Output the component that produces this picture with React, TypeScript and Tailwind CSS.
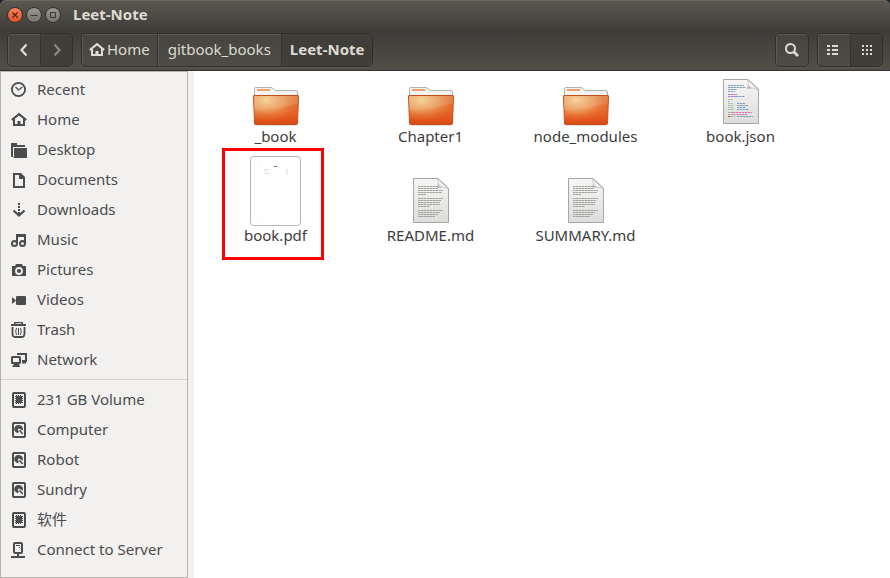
import React, { useId } from "react";

type IconProps = { children: React.ReactNode; className?: string };

function Glyph({ children, className = "" }: IconProps) {
  return (
    <svg viewBox="0 0 16 16" width="16" height="16" fill="currentColor" aria-hidden="true" className={"shrink-0 " + className}>
      {children}
    </svg>
  );
}

const HomeIcon = () => (
  <Glyph>
    <path d="M0.800 8 8 2.200 15.200 8" fill="none" stroke="currentColor" strokeWidth="2.200" />
    <path d="M3 7V13H13V7" fill="none" stroke="currentColor" strokeWidth="2" />
    <path d="M6.500 9H9.500V13H6.500Z" />
  </Glyph>
);
const RecentIcon = () => (
  <Glyph>
    <circle cx="7.500" cy="7.500" r="6.600" fill="none" stroke="currentColor" strokeWidth="1.800" />
    <path d="m4.500 5 3 3 4-3" fill="none" stroke="currentColor" strokeWidth="1.200" />
  </Glyph>
);
const DesktopIcon = () => (
  <Glyph>
    <path d="M0 1H6V3H14V5H3V15H0Z" />
    <path d="M2.500 6H16V16H2.500Z" />
    <path d="M2.500 5V15" stroke="#f2f1f0" />
    <path d="M2 5.500H15" stroke="#f2f1f0" />
  </Glyph>
);
const DocumentIcon = () => (
  <Glyph>
    <path d="M2 1H10L14 5V16H2ZM4 3V14H12V7H8V3Z" fillRule="evenodd" />
  </Glyph>
);
const DownloadIcon = () => (
  <Glyph>
    <path d="M7 1H9V3H7ZM7 4H9V6H7ZM7 7H9V9H7ZM7 10H9V13H7Z" />
    <path d="m2.500 8.500 5.500 5 5.500-5" fill="none" stroke="currentColor" strokeWidth="2.200" />
  </Glyph>
);
const MusicIcon = () => (
  <Glyph>
    <path d="M5 2H15V12H13V5H7V12H5Z" />
    <circle cx="3.500" cy="11.500" r="2.500" fill="none" stroke="currentColor" strokeWidth="2" />
    <circle cx="11.500" cy="11.500" r="2.500" fill="none" stroke="currentColor" strokeWidth="2" />
  </Glyph>
);
const CameraIcon = () => (
  <Glyph>
    <path d="M1 4H4L5 2H11L12 4H15V14H1Z" />
    <circle cx="8" cy="9" r="3" fill="none" stroke="#f2f1f0" strokeWidth="1.800" />
  </Glyph>
);
const VideoIcon = () => (
  <Glyph>
    <path d="M1 5 5 8.500 1 12Z" />
    <rect x="5" y="4" width="10" height="9" rx="1" />
  </Glyph>
);
const TrashIcon = () => (
  <Glyph>
    <path d="M3 0H12V2H15V4H0V2H3ZM4.500 1.200V2H10.500V1.200Z" fillRule="evenodd" />
    <path d="M1.500 5V11Q1.500 15 4 15H11Q13.500 15 13.500 11V5" fill="none" stroke="currentColor" strokeWidth="1.800" />
    <path d="M5.500 6Q4 9 5.500 13M7.500 6V13M9.500 6Q11 9 9.500 13" fill="none" stroke="currentColor" />
  </Glyph>
);
const NetworkIcon = () => (
  <Glyph>
    <path d="M7 3V2H15V9H11M11 10.500H15" fill="none" stroke="currentColor" strokeWidth="2" />
    <rect x="1" y="5" width="8" height="6" rx="0.500" fill="#f2f1f0" stroke="currentColor" strokeWidth="2" />
    <path d="M3 12H8L9 15H1Z" />
  </Glyph>
);
const ChipIcon = () => (
  <Glyph>
    <rect x="2" y="1" width="12" height="14" rx="1" fill="none" stroke="currentColor" strokeWidth="2" />
    <rect x="5" y="4" width="6" height="7" />
    <path d="M4 4.500H12M4 6.500H12M4 8.500H12M4 10.500H12M5.500 3V12M7.500 3V12M9.500 3V12" stroke="currentColor" />
  </Glyph>
);
const DiskIcon = () => (
  <Glyph>
    <rect x="2" y="1" width="12" height="14" rx="1" fill="none" stroke="currentColor" strokeWidth="2" />
    <path d="M8 3A4 4 0 0 0 5 10.200Q6 11.200 7 11L8 9.500Q6.800 8.800 6.900 7.500A1.400 1.400 0 0 1 9.200 7.200L11.800 8.500A4.200 4.200 0 0 0 8 3Z" />
    <path d="m8.500 8.300 3.200 3.700" stroke="currentColor" strokeWidth="1.600" />
  </Glyph>
);
const ServerIcon = () => (
  <Glyph>
    <rect x="3" y="1" width="8" height="10" rx="1" fill="none" stroke="currentColor" strokeWidth="2" />
    <path d="M5 3H9V4H5ZM8 5H9V6H8ZM6 11H8V14H14V16H0V14H6Z" />
  </Glyph>
);

const places: [string, () => React.ReactElement][] = [
  ["Recent", RecentIcon],
  ["Home", HomeIcon],
  ["Desktop", DesktopIcon],
  ["Documents", DocumentIcon],
  ["Downloads", DownloadIcon],
  ["Music", MusicIcon],
  ["Pictures", CameraIcon],
  ["Videos", VideoIcon],
  ["Trash", TrashIcon],
  ["Network", NetworkIcon],
];

const devices: [string, () => React.ReactElement][] = [
  ["231 GB Volume", ChipIcon],
  ["Computer", DiskIcon],
  ["Robot", DiskIcon],
  ["Sundry", DiskIcon],
  ["软件", ChipIcon],
  ["Connect to Server", ServerIcon],
];

function PlaceList({ items }: { items: typeof places }) {
  return (
    <ul>
      {items.map(([label, Icon]) => (
        <li key={label}>
          <a href="#" className="flex h-[30px] items-center gap-2.5 pl-2.5">
            <Icon />
            <span className="pb-0.5 whitespace-nowrap">{label}</span>
          </a>
        </li>
      ))}
    </ul>
  );
}

function FolderArt() {
  const id = useId();
  return (
    <svg width="48" height="48" viewBox="0 0 48 48" aria-hidden="true">
      <defs>
        <linearGradient id={id + "f"} x1="0" y1="0" x2="0" y2="1">
          <stop offset="0" stopColor="#d9793c" />
          <stop offset="0.500" stopColor="#e4692b" />
          <stop offset="1" stopColor="#dd4814" />
        </linearGradient>
        <radialGradient id={id + "g"} cx="0.280" cy="0.150" r="0.850">
          <stop offset="0" stopColor="#f6cf92" />
          <stop offset="0.500" stopColor="#eda564" stopOpacity="0.700" />
          <stop offset="1" stopColor="#f0561c" stopOpacity="0" />
        </radialGradient>
      </defs>
      <ellipse cx="24" cy="46" rx="22" ry="1.200" fill="#00000022" />
      <path d="M2.500 18V9.500Q2.500 8.500 4 8.500H19Q20.500 8.500 21.500 10T24 11.500H44Q45.500 11.500 45.500 13V18" fill="#f3f3f2" stroke="#b3b2b0" />
      <path d="M5 10H18V12H5Z" fill="#f0a070" />
      <path d="M1.500 17Q1.500 16.500 2 16.500H46Q46.500 16.500 46.500 17L45.500 44Q45.500 45.500 44.500 45.500H3.500Q2.500 45.500 2.500 44Z" fill={"url(#" + id + "f)"} stroke="#c2511d" />
      <path d="M2 17H46L45 44H3Z" fill={"url(#" + id + "g)"} />
      <path d="M2 17H46V24Q25 31 2.500 31Z" fill="#ffffff1c" />
    </svg>
  );
}

const proseLines: [number, number][] = [
  [8.500, 25], [10.500, 20], [12.500, 25], [14.500, 24], [16.500, 8],
  [20.500, 25], [22.500, 23], [24.500, 22], [26.500, 22], [28.500, 12],
  [32.500, 25], [34.500, 22], [36.500, 20], [38.500, 17],
];

const codeRuns: [number, number, number, string][] = [
  [6.500, 6, 16, "#7fa3bd"], [8.500, 6, 18, "#7fa3bd"], [10.500, 6, 9, "#7fa3bd"], [12.500, 6, 7, "#7fa3bd"],
  [15.500, 6, 4, "#b07ad8"], [15.500, 10, 5, "#d77ab5"], [17.500, 6, 8, "#b07ad8"], [17.500, 14, 9, "#7fa3bd"],
  [20.500, 6, 5, "#9cc59c"], [22.500, 6, 1, "#999999"], [24.500, 6, 5, "#9cc59c"], [24.500, 15, 8, "#7fa3bd"],
  [26.500, 6, 6, "#9cc59c"], [26.500, 15, 11, "#7fa3bd"], [28.500, 6, 5, "#9cc59c"], [28.500, 15, 9, "#7fa3bd"],
  [30.500, 6, 6, "#9cc59c"], [30.500, 15, 12, "#7fa3bd"], [33.500, 6, 5, "#aaaaaa"], [33.500, 11, 19, "#d77ab5"],
  [35.500, 6, 5, "#aaaaaa"], [35.500, 11, 14, "#d77ab5"], [37.500, 6, 3, "#e0403c"], [37.500, 9, 4, "#9cc59c"], [37.500, 15, 16, "#7fa3bd"],
];

function PageArt({ code = false }: { code?: boolean }) {
  const id = useId();
  return (
    <svg width="38" height="48" viewBox="0 0 38 48" aria-hidden="true">
      <defs>
        <linearGradient id={id + "p"} x1="0" y1="0" x2="0" y2="1">
          <stop offset="0" stopColor="#f6f6f5" />
          <stop offset="1" stopColor="#dcdcdb" />
        </linearGradient>
        <linearGradient id={id + "c"} x1="0.150" y1="0.850" x2="0.600" y2="0.400">
          <stop offset="0" stopColor="#a8a8a8" />
          <stop offset="0.500" stopColor="#ffffff" />
          <stop offset="1" stopColor="#e6e6e6" />
        </linearGradient>
      </defs>
      <path d="M1.500 0.500H26L36.500 10V44.500H1.500Z" fill={"url(#" + id + "p)"} stroke="#a6a6a5" />
      <g strokeWidth="1">
        {code
          ? codeRuns.map(([y, x, w, color], i) => <path key={i} d={`M${x} ${y}h${w}`} stroke={color} strokeDasharray="2.5 0.5" />)
          : proseLines.map(([y, w]) => <path key={y} d={`M6 ${y}h${w}`} stroke="#a3a3a2" strokeDasharray="2.6 0.4" />)}
      </g>
      <path d="M25.500 1Q27.500 5 25.500 9.500Q31 8 36 10.500Z" fill={"url(#" + id + "c)"} stroke="#bcbcbb" strokeWidth="0.800" />
    </svg>
  );
}

function PdfArt() {
  return (
    <svg width="52" height="70" viewBox="0 0 52 70" aria-hidden="true">
      <rect x="0.500" y="0.500" width="50" height="69" rx="3" fill="#fefefe" stroke="#b5b5b4" />
      <path d="M24 10.500H27" stroke="#777777" />
      <path d="M14 13.500H18M15 15.500H17M15 17.500H19M36 13.500H38M36 15.500H38M36 17.500H38" stroke="#dcdce6" />
      <path d="M9 6.500H10M8 64.500H9" stroke="#dddddd" />
    </svg>
  );
}

const files: { name: string; art: React.ReactElement; marked?: boolean }[] = [
  { name: "_book", art: <FolderArt /> },
  { name: "Chapter1", art: <FolderArt /> },
  { name: "node_modules", art: <FolderArt /> },
  { name: "book.json", art: <PageArt code /> },
  { name: "book.pdf", art: <PdfArt />, marked: true },
  { name: "README.md", art: <PageArt /> },
  { name: "SUMMARY.md", art: <PageArt /> },
];

const group = "flex h-[34px] overflow-hidden rounded-[5px] border border-[#302f2b] bg-gradient-to-b from-[#45443f] to-[#4e4c45] shadow-[0_1px_0_#5b5850]";
const raised = "flex items-center justify-center shadow-[inset_1px_1px_0_#5b5951]";
const pressed = "flex items-center justify-center border-l border-[#34332f] bg-[#3f3e39]";
const knob = "flex size-4 items-center justify-center rounded-full border border-[#33322e] bg-gradient-to-b from-[#9a988f] to-[#75736b] text-[#37362f]";

export default function App() {
  return (
    <div className="flex min-h-screen flex-col bg-[#142831] font-['Noto_Sans','Noto_Sans_CJK_SC',sans-serif] text-[15px] leading-5 text-[#3c3c3c]">
      <header className="rounded-t-md border-b border-[#33322e] bg-[#3f3e3a] text-[#dfdbd2]">
        <div className="flex h-[29px] items-center gap-[3px] rounded-t-md bg-gradient-to-b from-[#5b5850] to-[#403f3a] pl-[7px] shadow-[inset_0_1px_0_#6b685e]">
          <button aria-label="Close" className="flex size-4 items-center justify-center rounded-full border border-[#33322e] bg-gradient-to-b from-[#f58362] to-[#e0501f] text-[#4b2416]">
            <svg width="8" height="8" viewBox="0 0 8 8" stroke="currentColor" strokeWidth="1.200"><path d="m1.500 1.500 5 5m0-5-5 5" /></svg>
          </button>
          <button aria-label="Minimize" className={knob}>
            <svg width="8" height="8" viewBox="0 0 8 8" stroke="currentColor"><path d="M0.500 4.500H7.500" /></svg>
          </button>
          <button aria-label="Maximize" className={knob}>
            <svg width="8" height="8" viewBox="0 0 8 8" fill="none" stroke="currentColor"><path d="M1.500 1.500H6.500V6.500H1.500Z" /></svg>
          </button>
          <h1 className="pb-0.5 pl-[9px] font-bold">Leet-Note</h1>
        </div>
        <div className="flex h-[41px] items-center gap-2 bg-gradient-to-b from-[#3d3c38] to-[#514e47] px-[7px]">
          <div className={group}>
            <button aria-label="Back" className={raised + " w-8"}>
              <svg width="16" height="16" viewBox="0 0 16 16" fill="none" stroke="currentColor" strokeWidth="2.200"><path d="M10.500 2.500 5.500 8l5 5.500" /></svg>
            </button>
            <button aria-label="Forward" className={pressed + " w-8 text-[#8b8880]"}>
              <svg width="16" height="16" viewBox="0 0 16 16" fill="none" stroke="currentColor" strokeWidth="2.200"><path d="m5.500 2.500 5 5.500-5 5.500" /></svg>
            </button>
          </div>
          <nav aria-label="Path" className={group}>
            <button className={raised + " px-[7px]"}>
              <HomeIcon />
              <span className="pb-0.5 pl-0.5">Home</span>
            </button>
            <button className={raised + " border-l border-[#34332f] px-2.5 pb-0.5"}>gitbook_books</button>
            <button className={pressed + " px-2 pb-0.5 font-bold"}>Leet-Note</button>
          </nav>
          <div className="ml-auto flex gap-2">
            <div className={group}>
              <button aria-label="Search" className={raised + " w-8"}>
                <svg width="16" height="16" viewBox="0 0 16 16" fill="none" stroke="currentColor"><circle cx="6.500" cy="6.500" r="4.500" strokeWidth="2" /><path d="m10 10 4 4" strokeWidth="2.600" /></svg>
              </button>
            </div>
            <div className={group}>
              <button aria-label="List view" className={raised + " w-8"}>
                <Glyph><path d="M1 3H4V5H1ZM6 3H12V5H6ZM1 7H4V9H1ZM6 7H12V9H6ZM1 11H4V13H1ZM6 11H12V13H6Z" /></Glyph>
              </button>
              <button aria-label="Icon view" className={pressed + " w-8"}>
                <Glyph><path d="M3 3H5V5H3ZM7 3H9V5H7ZM11 3H13V5H11ZM3 7H5V9H3ZM7 7H9V9H7ZM11 7H13V9H11ZM3 11H5V13H3ZM7 11H9V13H7ZM11 11H13V13H11Z" /></Glyph>
              </button>
            </div>
          </div>
        </div>
      </header>
      <div className="flex flex-1 bg-[#f2f1f0]">
        <aside className="w-[188px] shrink-0 border border-[#b6b3ae] pt-[3px] text-[#4c4c4c]">
          <PlaceList items={places} />
          <hr className="mt-1 mb-[5px] border-[#d8d6d3]" />
          <PlaceList items={devices} />
        </aside>
        <main className="ml-1.5 grid flex-1 grid-cols-[repeat(auto-fill,155px)] content-start gap-y-[11px] bg-white pt-2 pl-1">
          {files.map(({ name, art, marked }) => (
            <button key={name} className="relative flex flex-col items-center self-end leading-[18px]">
              {art}
              <span>{name}</span>
              {marked && <span className="absolute -top-2 left-6 h-28 w-[102px] border-3 border-[#ff0000]" />}
            </button>
          ))}
        </main>
      </div>
    </div>
  );
}
